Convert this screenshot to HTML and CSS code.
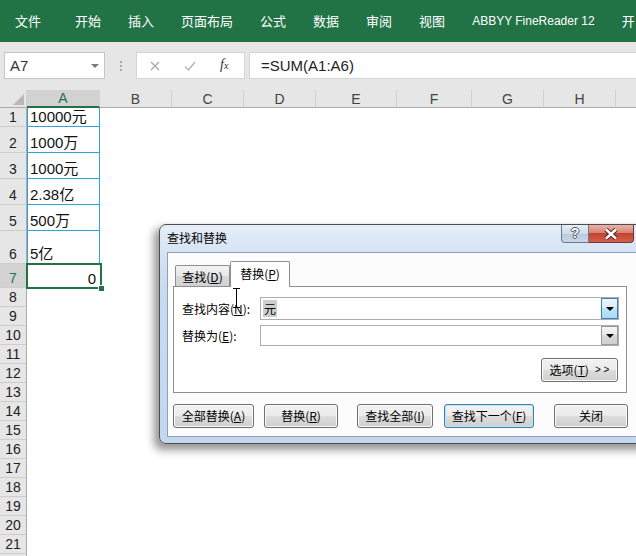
FILE: index.html
```html
<!DOCTYPE html>
<html lang="zh-CN">
<head>
<meta charset="utf-8">
<title>Excel 查找和替换</title>
<link rel="stylesheet" href="styles.css">
</head>
<body>
<div class="app">
  <div class="ribbon">
    <span class="first">文件</span>
    <span>开始</span>
    <span>插入</span>
    <span>页面布局</span>
    <span>公式</span>
    <span>数据</span>
    <span>审阅</span>
    <span>视图</span>
    <span class="abbyy">ABBYY FineReader 12</span>
    <span>开</span>
  </div>

  <div class="fbar">
    <div class="namebox"><span>A7</span><i class="caret"></i></div>
    <div class="dots"><i></i><i></i><i></i></div>
    <div class="fbtns">
      <svg class="ic-x" width="10" height="10" viewBox="0 0 10 10"><path d="M1 1L9 9M9 1L1 9" stroke="#a8a8a8" stroke-width="1.3" fill="none"/></svg>
      <svg class="ic-ok" width="12" height="10" viewBox="0 0 12 10"><path d="M1 5.5L4.5 9L11 1" stroke="#b5b5b5" stroke-width="1.4" fill="none"/></svg>
      <span class="fx">f<span class="fxx">x</span></span>
    </div>
    <div class="formula">=SUM(A1:A6)</div>
  </div>

  <div class="sheet">
    <div class="colhdr">
      <div class="corner"><i class="tri-corner"></i></div>
      <div class="ch sel wA">A</div>
      <div class="ch w72">B</div>
      <div class="ch w72">C</div>
      <div class="ch w72">D</div>
      <div class="ch wE">E</div>
      <div class="ch wF">F</div>
      <div class="ch w72">G</div>
      <div class="ch w72">H</div>
      <div class="ch rest"></div>
    </div>

    <div class="row h19"><div class="rh">1</div><div class="ca blue">10000元</div></div>
    <div class="row h26"><div class="rh">2</div><div class="ca blue">1000万</div></div>
    <div class="row h26"><div class="rh">3</div><div class="ca blue">1000元</div></div>
    <div class="row h26"><div class="rh">4</div><div class="ca blue">2.38亿</div></div>
    <div class="row h26"><div class="rh">5</div><div class="ca blue">500万</div></div>
    <div class="row h33"><div class="rh">6</div><div class="ca blue">5亿</div></div>
    <div class="row h23"><div class="rh sel">7</div><div class="ca active">0<span class="selbox"></span><span class="handle"></span></div></div>
    <div class="row h19"><div class="rh">8</div></div>
    <div class="row h19"><div class="rh">9</div></div>
    <div class="row h19"><div class="rh">10</div></div>
    <div class="row h19"><div class="rh">11</div></div>
    <div class="row h19"><div class="rh">12</div></div>
    <div class="row h19"><div class="rh">13</div></div>
    <div class="row h19"><div class="rh">14</div></div>
    <div class="row h19"><div class="rh">15</div></div>
    <div class="row h19"><div class="rh">16</div></div>
    <div class="row h19"><div class="rh">17</div></div>
    <div class="row h19"><div class="rh">18</div></div>
    <div class="row h19"><div class="rh">19</div></div>
    <div class="row h19"><div class="rh">20</div></div>
    <div class="row h19"><div class="rh">21</div></div>
    <div class="row h19"><div class="rh"></div></div>
  </div>

  <div class="dlg">
    <div class="titlebar"><span class="title">查找和替换</span></div>
    <div class="capbtns">
      <span class="help">?</span>
      <span class="close"><svg width="16" height="12" viewBox="0 0 16 12"><path d="M3 1.5L13 10.5M13 1.5L3 10.5" stroke="#4a2420" stroke-width="4.4" fill="none"/><path d="M3 1.5L13 10.5M13 1.5L3 10.5" stroke="#ffffff" stroke-width="2.4" fill="none"/></svg></span>
    </div>
    <div class="client">
      <div class="tabs">
        <div class="tab">查找(<u>D</u>)</div>
        <div class="tab active">替换(<u>P</u>)</div>
      </div>
      <div class="panel">
        <div class="frow">
          <span class="lbl">查找内容(<u>N</u>):</span>
          <div class="combo"><span class="seltext">元</span><span class="dd focus"><i class="tri"></i></span></div>
        </div>
        <div class="frow r2">
          <span class="lbl">替换为(<u>E</u>):</span>
          <div class="combo"><span></span><span class="dd"><i class="tri"></i></span></div>
        </div>
        <div class="optrow">
          <button class="btn opt">选项(<u>T</u>)<span class="gg">&gt; &gt;</span></button>
        </div>
      </div>
      <div class="btnrow">
        <button class="btn b1">全部替换(<u>A</u>)</button>
        <button class="btn b2">替换(<u>R</u>)</button>
        <button class="btn b3">查找全部(<u>I</u>)</button>
        <button class="btn b4 default">查找下一个(<u>F</u>)</button>
        <button class="btn b5">关闭</button>
      </div>
    </div>
  </div>

  <svg class="ibeam" width="9" height="20" viewBox="0 0 9 20"><path d="M1 0.5H8M4.5 0.5V19.5M1 19.5H8" stroke="#000" stroke-width="1" fill="none"/></svg>
</div>
</body>
</html>
```

FILE: styles.css
```css
* { box-sizing: border-box; margin: 0; padding: 0; }
html, body { width: 636px; height: 556px; overflow: hidden; background: #fff; }
body { font-family: "Liberation Sans", "Noto Sans CJK SC", sans-serif; }

.app { position: relative; width: 636px; height: 556px; overflow: hidden; background: #fff; }

/* ribbon */
.ribbon {
  height: 42px; background: #217346; color: #fff;
  display: flex; align-items: center; gap: 27px; padding-left: 15px;
  font: 13px/16px "Noto Sans CJK SC", sans-serif; white-space: nowrap;
}
.ribbon .first { margin-right: 7px; }
.ribbon .abbyy { font: 12px/16px "Liberation Sans", sans-serif; }

/* formula bar */
.fbar {
  height: 48px; background: #e6e6e6;
  display: flex; align-items: flex-start; padding: 10px 0 0 4px;
}
.namebox {
  width: 101px; height: 27px; flex: none; background: #fff; border: 1px solid #c6c6c6;
  display: flex; align-items: center; justify-content: space-between;
  padding: 0 5px 0 5px; font-size: 15px; color: #333;
}
.caret { width: 0; height: 0; border-left: 4px solid transparent; border-right: 4px solid transparent; border-top: 4px solid #7a7a7a; }
.dots { width: 31px; height: 27px; flex: none; display: flex; flex-direction: column; align-items: center; justify-content: center; gap: 2px; }
.dots i { width: 2px; height: 2px; background: #a9a9a9; }
.fbtns {
  width: 109px; height: 27px; flex: none; background: #fff; border: 1px solid #d4d4d4;
  display: flex; align-items: center; padding-left: 13px;
}
.ic-ok { margin-left: 24px; }
.fx { margin-left: 24px; font: italic 14px/16px "Liberation Serif", serif; color: #333; }
.fxx { font-size: 10px; }
.formula {
  margin-left: 4px; width: 400px; flex: none; height: 27px; background: #fff; border: 1px solid #d4d4d4;
  padding-left: 11px; font-size: 15px; line-height: 25px; color: #222;
}

/* sheet */
.sheet { display: flex; flex-direction: column; }
.colhdr { display: flex; height: 18px; background: #e6e6e6; }
.corner {
  width: 27px; flex: none; border-right: 1px solid #cfcfcf; border-bottom: 1px solid #ababab;
  display: flex; align-items: flex-end; justify-content: flex-end; padding: 0 2px 2px 0;
}
.tri-corner { width: 0; height: 0; border-left: 11px solid transparent; border-bottom: 11px solid #b8b8b8; }
.ch {
  flex: none; display: flex; align-items: center; justify-content: center;
  font-size: 14px; color: #444; border-right: 1px solid #d0d0d0; border-bottom: 1px solid #ababab;
}
.ch.sel { background: #d2d2d2; color: #217346; border-bottom: 2px solid #217346; }
.wA { width: 73px; }
.w72 { width: 72px; }
.wE { width: 81px; }
.wF { width: 75px; }
.ch.rest { flex: 1; border-right: none; }

.row { display: flex; flex: none; }
.h19 { height: 19px; }
.h23 { height: 24px; }
.h26 { height: 26px; }
.h33 { height: 33px; }
.rh {
  width: 27px; flex: none; background: #e6e6e6; color: #222;
  border-right: 1px solid #ababab; border-bottom: 1px solid #cdcdcd;
  display: flex; align-items: flex-end; justify-content: center;
  font-size: 14px; line-height: 16px; padding-bottom: 1px;
}
.rh.sel { background: #d2d2d2; color: #217346; }
.ca {
  width: 73px; flex: none; display: flex; align-items: flex-end;
  font-size: 15px; line-height: 17px; padding: 0 0 1px 3px; color: #111;
}
.ca.blue { border-left: 1px solid #2ea3dc; border-right: 1px solid #2ea3dc; border-bottom: 1px solid #2ea3dc; padding-left: 2px; }
.ca.active { position: relative; justify-content: flex-end; padding-right: 4px; }
.selbox { position: absolute; left: -1px; top: -1px; right: -2px; bottom: -1px; border: 2px solid #217346; }
.handle { position: absolute; right: -5px; bottom: -4px; width: 7px; height: 7px; background: #217346; border: 1px solid #fff; }

/* dialog */
.dlg {
  position: absolute; left: 159px; top: 224px; width: 500px; height: 220px;
  border: 1px solid #4d4d4d; border-radius: 7px;
  background: linear-gradient(to bottom, #e6eef8 0, #d6e4f4 26px, #c9dbef 60px, #c3d7ee 100%);
  box-shadow: -4px 5px 9px 1px rgba(0, 0, 0, 0.42);
  font: 12px/16px "Noto Sans CJK SC", sans-serif; color: #000;
}
.titlebar { height: 27px; display: flex; align-items: center; padding: 0 0 1px 7px; }
.capbtns { position: absolute; left: 401px; top: 0; display: flex; height: 18px; }
.help {
  width: 28px; height: 18px; border: 1px solid #6c7a8c; border-top: none; border-radius: 0 0 0 4px;
  background: linear-gradient(#e6eef7, #cfdcea 50%, #b7c9dd 50%, #c8d8e9);
  color: #fff; font: bold 14px/17px "Liberation Sans", sans-serif; text-align: center;
  text-shadow: 1px 0 0 #4e5662, -1px 0 0 #4e5662, 0 1px 0 #4e5662, 0 -1px 0 #4e5662;
}
.close {
  width: 45px; height: 18px; border: 1px solid #6b3a35; border-top: none; border-left: none; border-radius: 0 0 4px 0;
  background: linear-gradient(#eab1a7, #d98576 45%, #c5412f 50%, #d4614f);
  display: flex; align-items: center; justify-content: center;
}

.client {
  margin-left: 7px; width: 490px; height: 185px; border: 1px solid #8ba0bd; background: #fcfcfc;
  display: flex; flex-direction: column; align-items: flex-start;
}
.tabs { display: flex; align-items: flex-end; height: 25px; margin-top: 8px; padding-left: 7px; position: relative; z-index: 1; }
.tab {
  width: 55px; height: 21px; border: 1px solid #8c8e94; border-bottom: none; border-radius: 2px 2px 0 0;
  background: linear-gradient(#f3f3f3, #e6e6e6 50%, #d8d8d8 50%, #d2d2d2);
  display: flex; align-items: center; justify-content: center; padding-top: 1px;
}
.tab.active { width: 60px; height: 26px; margin-bottom: -1px; background: #fff; padding-top: 0; padding-bottom: 2px; }
.panel {
  margin-left: 5px; width: 454px; height: 107px; border: 1px solid #8c8e94; background: #fff;
  padding: 10px 7px 0 8px;
}
.frow { display: flex; align-items: center; height: 23px; }
.frow.r2 { margin-top: 5px; height: 21px; }
.lbl { width: 78px; flex: none; }
.combo {
  width: 359px; height: 100%; border: 1px solid #abadb3; background: #fff;
  display: flex; align-items: center; justify-content: space-between; padding-left: 2px;
}
.seltext { background: #cdcdcd; padding: 0 1px; line-height: 17px; }
.dd {
  width: 17px; align-self: stretch;
  border: 1px solid #9a9a9a;
  background: linear-gradient(#f4f4f4, #e8e8e8 50%, #d9d9d9 50%, #d0d0d0);
  display: flex; align-items: center; justify-content: center;
}
.dd.focus { border-color: #3c7fb1; background: linear-gradient(#e8f5fd, #d8eefb 50%, #bee4f8 50%, #a9daf5); }
.tri { width: 0; height: 0; border-left: 4px solid transparent; border-right: 4px solid transparent; border-top: 4px solid #000; }
.optrow { display: flex; justify-content: flex-end; width: 100%; margin-top: 12px; padding-right: 1px; }

.btn {
  font: inherit; color: #000; height: 24px; flex: none;
  border: 1px solid #707070; border-radius: 3px;
  background: linear-gradient(#f2f2f2, #ebebeb 50%, #dddddd 50%, #cfcfcf);
  box-shadow: inset 0 0 0 1px #fbfbfb;
  display: flex; align-items: center; justify-content: center;
}
.btn.opt { width: 77px; }
.gg { margin-left: 6px; font: 10px/12px "Liberation Sans", sans-serif; }
.btnrow { display: flex; margin-top: 11px; margin-left: 5px; }
.b1 { width: 81px; }
.b2 { width: 74px; margin-left: 10px; }
.b3 { width: 76px; margin-left: 19px; }
.b4 { width: 90px; margin-left: 11px; }
.b5 { width: 74px; margin-left: 20px; }
.btn.default { border-color: #3c7fb1; box-shadow: inset 0 0 0 1px #bde6fb; }

.ibeam { position: absolute; left: 232px; top: 288px; }
```
